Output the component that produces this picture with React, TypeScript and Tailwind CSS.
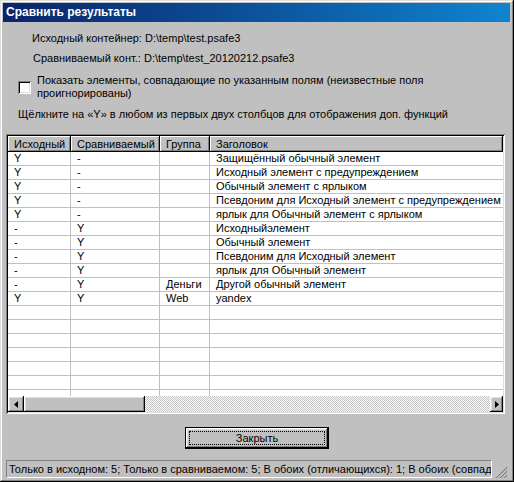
const font = { fontFamily: '"Liberation Sans", Arial, sans-serif' };

const rows: [string, string, string, string][] = [
  ['Y', '-', '', 'Защищённый обычный элемент'],
  ['Y', '-', '', 'Исходный элемент с предупреждением'],
  ['Y', '-', '', 'Обычный элемент с ярлыком'],
  ['Y', '-', '', 'Псевдоним для Исходный элемент с предупреждением'],
  ['Y', '-', '', 'ярлык для Обычный элемент с ярлыком'],
  ['-', 'Y', '', 'Исходныйэлемент'],
  ['-', 'Y', '', 'Обычный элемент'],
  ['-', 'Y', '', 'Псевдоним для Исходный элемент'],
  ['-', 'Y', '', 'ярлык для Обычный элемент'],
  ['-', 'Y', 'Деньги', 'Другой обычный элемент'],
  ['Y', 'Y', 'Web', 'yandex'],
];

const raised =
  'bg-[#c0c0c0] shadow-[inset_-1px_-1px_0_#000,inset_1px_1px_0_#fff,inset_-2px_-2px_0_#808080,inset_2px_2px_0_#dfdfdf]';

function Arrow({ dir }: { dir: 'left' | 'right' }) {
  return (
    <svg width="4" height="7" viewBox="0 0 4 7">
      {dir === 'left' ? <path d="M4 0 L0 3.5 L4 7 Z" fill="#000" /> : <path d="M0 0 L4 3.5 L0 7 Z" fill="#000" />}
    </svg>
  );
}

function HeaderCell({ w, label }: { w: string; label: string }) {
  return (
    <div
      className={`${w} h-full flex items-center pl-[6px] bg-[#c0c0c0] shadow-[inset_-1px_-1px_0_#000,inset_1px_1px_0_#fff,inset_-2px_-2px_0_#808080]`}
    >
      {label}
    </div>
  );
}

export default function App() {
  const empty: [string, string, string, string][] = Array.from({ length: 8 }, () => ['', '', '', '']);
  const all = [...rows, ...empty];

  return (
    <div
      style={font}
      className="w-[514px] h-[482px] flex flex-col bg-[#c0c0c0] text-black text-[11px] leading-[13px] pt-[3px] pl-[3px] pr-[4px] pb-[4px] overflow-hidden shadow-[inset_-1px_-1px_0_#000,inset_1px_1px_0_#dfdfdf,inset_-2px_-2px_0_#808080,inset_2px_2px_0_#fff]"
    >
      {/* title bar */}
      <div className="h-[19px] shrink-0 flex items-center pl-[3px] bg-gradient-to-r from-[#0a246a] to-[#1084d0] text-white font-bold text-[12px]">
        Сравнить результаты
      </div>

      <div className="flex flex-col flex-1 px-[3px]">
        <div className="mt-[10px] h-[13px] pl-[26px] whitespace-nowrap">Исходный контейнер: D:\temp\test.psafe3</div>
        <div className="mt-[7px] h-[13px] pl-[27px] whitespace-nowrap">
          Сравниваемый конт.: D:\temp\test_20120212.psafe3
        </div>

        <div className="mt-[9px] flex items-center h-[26px]">
          <div className="ml-[12px] w-[13px] h-[13px] bg-white shadow-[inset_1px_1px_0_#808080,inset_-1px_-1px_0_#fff,inset_2px_2px_0_#000,inset_-2px_-2px_0_#dfdfdf]" />
          <div className="ml-[6px] whitespace-nowrap">
            Показать элементы, совпадающие по указанным полям (неизвестные поля
            <br />
            проигнорированы)
          </div>
        </div>

        <div className="mt-[8px] h-[13px] pl-[12px] whitespace-nowrap">
          Щёлкните на «Y» в любом из первых двух столбцов для отображения доп. функций
        </div>

        {/* list view */}
        <div className="mt-[13px] mr-[2px] h-[280px] flex flex-col p-[2px] bg-white shadow-[inset_1px_1px_0_#808080,inset_-1px_-1px_0_#fff,inset_2px_2px_0_#000,inset_-2px_-2px_0_#dfdfdf]">
          <div className="h-[16px] shrink-0 flex">
            <HeaderCell w="w-[63px]" label="Исходный" />
            <HeaderCell w="w-[89px]" label="Сравниваемый" />
            <HeaderCell w="w-[50px]" label="Группа" />
            <HeaderCell w="flex-1" label="Заголовок" />
          </div>

          <div className="flex-1 overflow-hidden">
            {all.map((r, i) => (
              <div key={i} className="h-[14px] flex border-b border-[#c0c0c0] whitespace-nowrap">
                <div className="w-[63px] pl-[6px] border-r border-[#c0c0c0]">{r[0]}</div>
                <div className="w-[89px] pl-[6px] border-r border-[#c0c0c0]">{r[1]}</div>
                <div className="w-[50px] pl-[6px] border-r border-[#c0c0c0]">{r[2]}</div>
                <div className="flex-1 pl-[6px]">{r[3]}</div>
              </div>
            ))}
          </div>

          {/* horizontal scrollbar */}
          <div className="h-[16px] shrink-0 flex">
            <div className={`w-[16px] h-full flex items-center justify-center ${raised}`}>
              <Arrow dir="left" />
            </div>
            <div className={`w-[121px] h-full ${raised}`} />
            <div className="flex-1 h-full bg-[image:repeating-conic-gradient(#c0c0c0_0%_25%,#ffffff_0%_50%)] bg-[length:2px_2px]" />
            <div className={`w-[13px] h-full flex items-center justify-center ${raised}`}>
              <Arrow dir="right" />
            </div>
          </div>
        </div>

        <div className="mt-[13px] flex justify-center">
          <div className="ml-[1px] w-[144px] h-[22px] border border-black">
            <div className="w-full h-full p-[3px] shadow-[inset_-1px_-1px_0_#000,inset_1px_1px_0_#fff,inset_-2px_-2px_0_#808080,inset_2px_2px_0_#dfdfdf]">
              <div className="w-full h-full border border-dotted border-black flex items-center justify-center">
                Закрыть
              </div>
            </div>
          </div>
        </div>

        {/* status bar */}
        <div className="mt-[10px] h-[19px] flex items-end">
          <div className="w-[486px] h-[18px] flex items-center pl-[2px] overflow-hidden whitespace-nowrap border-t border-l border-[#808080] border-b border-r border-b-white border-r-white">
            Только в исходном: 5; Только в сравниваемом: 5; В обоих (отличающихся): 1; В обоих (совпадающих): 0
          </div>
          <div className="flex-1 flex justify-end items-end">
            <svg width="12" height="12" viewBox="0 0 12 12">
              <path d="M11 1 L1 11 M11 5 L5 11 M11 9 L9 11" stroke="#fff" strokeWidth="1" />
              <path d="M12 1 L1 12 M12 5 L5 12 M12 9 L9 12" stroke="#808080" strokeWidth="1.4" />
            </svg>
          </div>
        </div>
      </div>
    </div>
  );
}
